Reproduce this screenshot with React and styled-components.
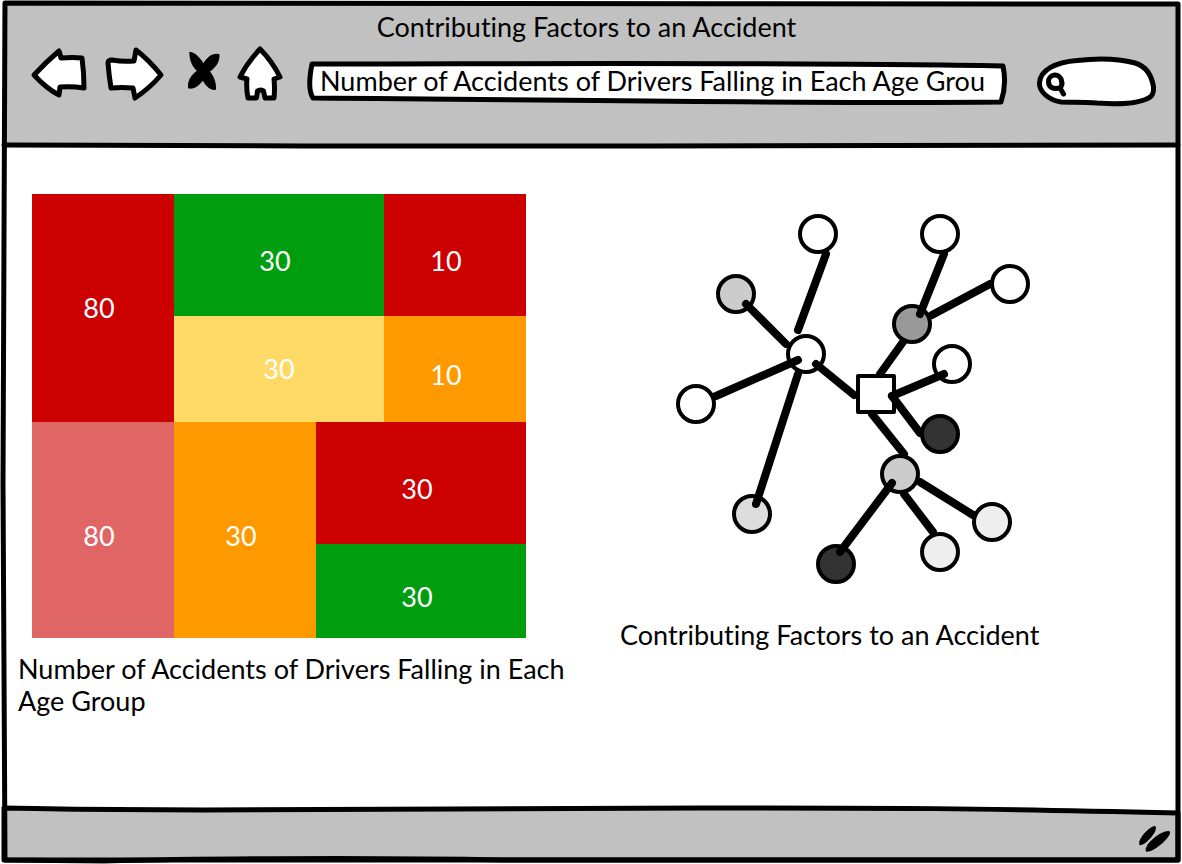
import React from "react";
import styled, { createGlobalStyle } from "styled-components";

const GlobalStyle = createGlobalStyle`
  *, *::before, *::after { box-sizing: border-box; }
  body {
    margin: 0;
    background: #fff;
    color: #000;
    font-family: Lato, "Open Sans", sans-serif;
    font-size: 27px;
    font-variant-ligatures: none;
    line-height: 32px;
  }
`;

const Page = styled.div`
  display: flex;
  min-height: 100vh;
  padding: 4px;
`;

const BrowserWindow = styled.div`
  position: relative;
  display: flex;
  flex: 1;
  flex-direction: column;
  min-width: 0;
`;

/* Hand-drawn outline that stretches with the box it decorates. */
const Sketch = styled.svg`
  position: absolute;
  inset: 0;
  width: 100%;
  height: 100%;
  overflow: visible;
  pointer-events: none;

  path {
    fill: ${(p) => p.$fill || "none"};
    stroke: #000;
    stroke-width: 5px;
    stroke-linejoin: round;
    stroke-linecap: round;
    vector-effect: non-scaling-stroke;
  }
`;

const Header = styled.header`
  position: relative;
  padding: 7px 20px 36px 27px;
  background: #c1c1c1;
`;

const Title = styled.h1`
  margin: 0 0 3px;
  padding-right: 16px;
  font: inherit;
  text-align: center;
`;

const Toolbar = styled.div`
  display: flex;
  gap: 18px;
  height: 64px;
`;

const IconButton = styled.button`
  flex: none;
  width: ${(p) => p.$width}px;
  padding: 0;
  border: 0;
  background: none;
  cursor: pointer;

  svg {
    display: block;
    width: 100%;
    height: 100%;
    overflow: visible;
    fill: ${(p) => (p.$solid ? "#000" : "#fff")};
    stroke: #000;
    stroke-width: ${(p) => (p.$solid ? 1 : 5)}px;
    stroke-linejoin: round;
    stroke-linecap: round;
  }
`;

const Field = styled.label`
  position: relative;
  display: flex;
  flex: ${(p) => (p.$width ? "none" : "1")};
  width: ${(p) => (p.$width ? `${p.$width}px` : "auto")};
  min-width: 0;
  padding: ${(p) => (p.$width ? "19px 12px 13px 44px" : "19px 8px 13px 14px")};
`;

const FieldInput = styled.input`
  position: relative;
  width: 100%;
  min-width: 0;
  height: 32px;
  padding: 0;
  border: 0;
  outline: 0;
  background: transparent;
  color: inherit;
  font: inherit;
`;

const Content = styled.main`
  display: grid;
  flex: 1;
  grid-template-columns: 602fr 558fr;
  align-content: start;
  padding: 48px 0 32px 14px;
`;

const Figure = styled.figure`
  min-width: 0;
  margin: 0;
`;

const Caption = styled.figcaption`
  max-width: 560px;
  margin-top: 15px;
`;

const Treemap = styled.div`
  display: grid;
  grid-template-columns: 142fr 142fr 68fr 142fr;
  grid-template-rows: 122px 106px 122px 94px;
  max-width: 508px;
  padding-left: 14px;
`;

const labelPadding = {
  normal: "12px 8px 0 0",
  narrow: "12px 18px 0 0",
  middle: "0 8px 0 0",
  centre: "0",
};

const Tile = styled.div`
  display: flex;
  align-items: center;
  justify-content: center;
  grid-area: ${(p) => p.$area};
  padding: ${(p) => labelPadding[p.$label]};
  background: ${(p) => p.$color};
  color: #fff;
`;

const Network = styled.svg`
  display: block;
  width: 100%;
  max-width: 420px;
  height: 410px;
`;

const Footer = styled.footer`
  position: relative;
  display: flex;
  justify-content: flex-end;
  height: 51px;
  padding: 16px 8px 0 0;
`;

const Grip = styled.svg`
  position: relative;
  width: 32px;
  height: 28px;
`;

const tiles = [
  { value: 80, area: "1 / 1 / 3 / 2", color: "#cc0000", label: "middle" },
  { value: 30, area: "1 / 2 / 2 / 4", color: "#009e0f", label: "normal" },
  { value: 10, area: "1 / 4 / 2 / 5", color: "#cc0000", label: "narrow" },
  { value: 30, area: "2 / 2 / 3 / 4", color: "#ffd966", label: "centre" },
  { value: 10, area: "2 / 4 / 3 / 5", color: "#ff9900", label: "narrow" },
  { value: 80, area: "3 / 1 / 5 / 2", color: "#e06666", label: "normal" },
  { value: 30, area: "3 / 2 / 5 / 3", color: "#ff9900", label: "normal" },
  { value: 30, area: "3 / 3 / 4 / 5", color: "#cc0000", label: "normal" },
  { value: 30, area: "4 / 3 / 5 / 5", color: "#009e0f", label: "normal" },
];

const nodes = [
  [818, 234, "#fff"],
  [940, 234, "#fff"],
  [1010, 284, "#fff"],
  [736, 294, "#ccc"],
  [912, 324, "#999"],
  [806, 354, "#fff"],
  [952, 364, "#fff"],
  [696, 404, "#fff"],
  [940, 434, "#333"],
  [900, 474, "#ccc"],
  [752, 514, "#ddd"],
  [992, 522, "#eee"],
  [940, 552, "#eee"],
  [836, 564, "#333"],
];

const links = [
  [826, 254, 798, 330],
  [746, 304, 786, 344],
  [798, 360, 716, 396],
  [816, 364, 854, 395],
  [798, 374, 756, 504],
  [944, 254, 920, 314],
  [990, 284, 932, 315],
  [903, 342, 880, 374],
  [892, 396, 944, 374],
  [892, 396, 920, 433],
  [872, 414, 904, 454],
  [892, 483, 840, 552],
  [904, 494, 933, 532],
  [920, 482, 973, 515],
];

function Icon({ box, children }) {
  return (
    <svg viewBox={box} aria-hidden="true">
      {children}
    </svg>
  );
}

export default function App() {
  return (
    <>
      <GlobalStyle />
      <Page>
        <BrowserWindow>
          <Header>
            <Sketch viewBox="0 0 1174 142" preserveAspectRatio="none" aria-hidden="true">
              <path d="M0 141 C100 141 180 142 300 142 C600 143 850 141 1174 141" />
            </Sketch>
            <Title>Contributing Factors to an Accident</Title>
            <Toolbar>
              <IconButton $width={56} aria-label="Back">
                <Icon box="31 46 56 64">
                  <path d="M34 75 Q46 62 59 51 L61 58 Q73 57 82 58 Q84 72 84 88 Q72 86 60 87 L59 95 Q47 89 34 75Z" />
                </Icon>
              </IconButton>
              <IconButton $width={59} aria-label="Forward">
                <Icon box="105 46 59 64">
                  <path d="M108 63 Q108 60 112 60 Q123 62 134 61 L136 50 Q149 60 161 75 Q150 88 135 98 L133 88 Q122 87 111 88 Q109 76 108 63Z" />
                </Icon>
              </IconButton>
              <IconButton $width={38} $solid aria-label="Stop">
                <Icon box="182 46 38 64">
                  <path d="M190 52.500 C195 52.500 200 58 203.500 64 C208 56 213 53.500 219 54.500 C219.500 61 216 67 209.500 71.500 C213 76 216 82 215.500 89.500 C209 90 205 84 203 80 C199 85 195 89 188.500 88 C188 81 191 75 197.500 71 C192 66 189.500 59 190 52.500Z" />
                </Icon>
              </IconButton>
              <IconButton $width={50} aria-label="Home">
                <Icon box="238 46 50 64">
                  <path d="M260 49 Q272 61 280 77 L274 79 Q275 89 274 98 L265 98 L263.500 91 Q260 89 257.500 91 L256.500 98 L248 98 Q246 88 247 79 L240 77 Q247 63 260 49Z" />
                </Icon>
              </IconButton>
              <Field>
                <Sketch $fill="#fff" viewBox="306 46 702 64" preserveAspectRatio="none" aria-hidden="true">
                  <path d="M312 64 C500 64 800 62 1003 66 Q1007 84 1001 102 C800 104 600 100 313 98 Q307 89 312 64Z" />
                </Sketch>
                <FieldInput
                  type="text"
                  aria-label="Address"
                  defaultValue="Number of Accidents of Drivers Falling in Each Age Grou"
                />
              </Field>
              <Field $width={132}>
                <Sketch $fill="#fff" viewBox="1026 46 132 64" aria-hidden="true">
                  <path d="M1039.500 83 C1040 70 1056 62 1077 60.500 C1098 58 1120 59 1135 63 C1148 67 1152 77 1153.500 87 C1154 96 1150 98 1144 100 C1130 105 1112 104 1097 103 C1081 101.500 1071 102.500 1061 102 C1048 100 1039 91 1039.500 83Z" />
                  <path d="M1048.500 82 A6.500 6.500 0 0 1 1061.500 81 Q1063 85 1060 88 Q1049 90 1048.500 82Z M1060 88 L1063.500 94" />
                </Sketch>
                <FieldInput type="text" aria-label="Search" />
              </Field>
            </Toolbar>
          </Header>
          <Content>
            <Figure>
              <Treemap>
                {tiles.map((t) => (
                  <Tile key={t.area} $area={t.area} $color={t.color} $label={t.label}>
                    {t.value}
                  </Tile>
                ))}
              </Treemap>
              <Caption>Number of Accidents of Drivers Falling in Each Age Group</Caption>
            </Figure>
            <Figure>
              <Network viewBox="620 194 420 410" role="img" aria-label="Network of contributing factors">
                <g stroke="#000" strokeWidth="4">
                  {nodes.map(([x, y, fill]) => (
                    <circle key={`${x}-${y}`} cx={x} cy={y} r="18" fill={fill} />
                  ))}
                  <rect x="858" y="376" width="36" height="36" fill="#fff" strokeLinejoin="round" />
                </g>
                <g stroke="#000" strokeWidth="8" strokeLinecap="round">
                  {links.map(([x1, y1, x2, y2]) => (
                    <line key={`${x1}-${y1}-${x2}`} x1={x1} y1={y1} x2={x2} y2={y2} />
                  ))}
                </g>
              </Network>
              <Caption>Contributing Factors to an Accident</Caption>
            </Figure>
          </Content>
          <Footer>
            <Sketch $fill="#c1c1c1" viewBox="0 0 1174 51" preserveAspectRatio="none" aria-hidden="true">
              <path d="M0 -1 C60 0 90 1 200 1 C400 1 500 -1 700 -1 C900 -1 960 -1 1174 4 V51 H0Z" />
            </Sketch>
            <Grip viewBox="1138 825 32 28" aria-hidden="true">
              <path d="M1139.500 845 C1137 839 1150 826 1155 826 C1160 829 1145 847 1139.500 845Z M1146 851.500 C1143 845 1161 830 1169 831 C1175 834 1153 854 1146 851.500Z" />
            </Grip>
          </Footer>
          <Sketch viewBox="0 0 1174 856" preserveAspectRatio="none" aria-hidden="true">
            <path d="M1 -1 C300 -1 800 0 1174 0 C1173 300 1174 600 1174 856 C900 857 700 855 500 856 C350 853 180 855 100 857 L1 856 C1 780 -1 640 -1 480 C0 300 0 150 1 -1Z" />
          </Sketch>
        </BrowserWindow>
      </Page>
    </>
  );
}
